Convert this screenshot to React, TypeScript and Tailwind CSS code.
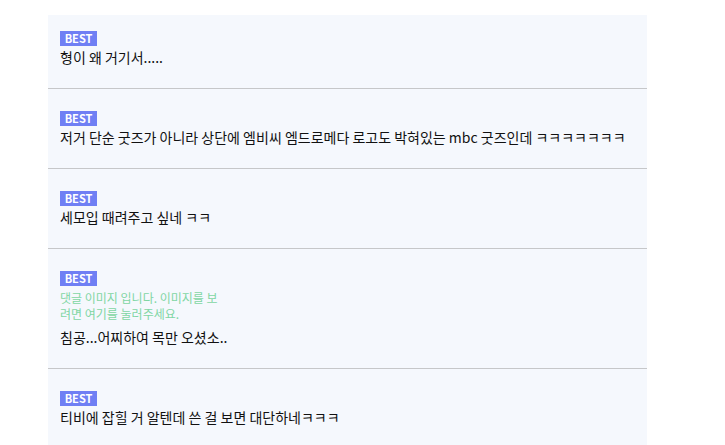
import React from "react";

const font = { fontFamily: '"Noto Sans CJK KR", "Noto Sans", sans-serif' };

function Badge() {
  return (
    <div className="flex h-[15px] w-[37px] items-center justify-center bg-[#6f7ff4] text-[11px] font-bold leading-none text-white">
      BEST
    </div>
  );
}

function Item({
  text,
  first,
  image,
}: {
  text: string;
  first?: boolean;
  image?: boolean;
}) {
  return (
    <div
      className={`border-b border-[#c6c7c9] px-[12px] pb-[20px] ${
        first ? "pt-[16px]" : "pt-[22px]"
      }`}
    >
      <Badge />
      {image && (
        <div className="mt-[4px] w-[162px] break-all text-[12px] leading-[16px] text-[#7fd6a4]">
          댓글 이미지 입니다. 이미지를 보려면 여기를 눌러주세요.
        </div>
      )}
      <div
        className={`text-[14px] leading-[22px] text-[#111] ${
          image ? "mt-[4px]" : ""
        }`}
      >
        {text}
      </div>
    </div>
  );
}

export default function App() {
  return (
    <div className="h-[445px] w-[725px] overflow-hidden bg-white" style={font}>
      <div className="ml-[48px] mt-[15px] w-[599px] bg-[#f5f8fd]">
        <Item first text="형이 왜 거기서....." />
        <Item text="저거 단순 굿즈가 아니라 상단에 엠비씨 엠드로메다 로고도 박혀있는 mbc 굿즈인데 ㅋㅋㅋㅋㅋㅋㅋ" />
        <Item text="세모입 때려주고 싶네 ㅋㅋ" />
        <Item image text="침공...어찌하여 목만 오셨소.." />
        <Item text="티비에 잡힐 거 알텐데 쓴 걸 보면 대단하네ㅋㅋㅋ" />
      </div>
    </div>
  );
}
